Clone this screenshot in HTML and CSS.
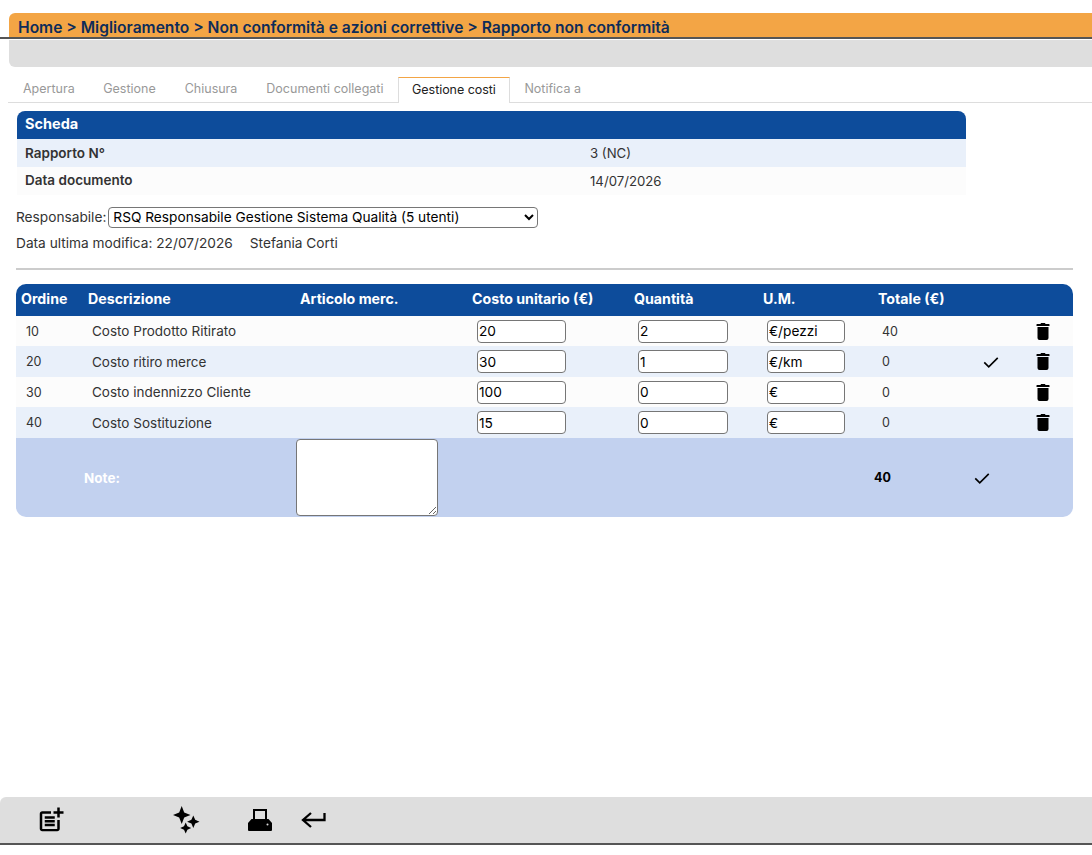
FILE: index.html
```html
<!DOCTYPE html>
<html>
<head>
  <title>Rapporto non conformità</title>
  <link rel="stylesheet" href="styles.css">
</head>
<body>
  <div class="breadcrumb">Home &gt; Miglioramento &gt; Non conformità e azioni correttive &gt; Rapporto non conformità</div>
  <div class="rule"></div>
  <div class="toolbar"></div>

  <div class="tabs">
    <div class="tab">Apertura</div>
    <div class="tab">Gestione</div>
    <div class="tab">Chiusura</div>
    <div class="tab">Documenti collegati</div>
    <div class="tab active">Gestione costi</div>
    <div class="tab">Notifica a</div>
  </div>

  <div class="scheda">
    <div class="scheda-title">Scheda</div>
    <div class="scheda-row alt"><b>Rapporto N°</b><span>3 (NC)</span></div>
    <div class="scheda-row"><b>Data documento</b><span>14/07/2026</span></div>
  </div>

  <div class="resp">
    <label>Responsabile:</label>
    <select class="resp-select">
      <option>RSQ Responsabile Gestione Sistema Qualità (5 utenti)</option>
    </select>
  </div>
  <div class="modified">
    <span>Data ultima modifica: 22/07/2026</span>
    <span>Stefania Corti</span>
  </div>
  <div class="divider"></div>

  <table class="costs">
    <colgroup>
      <col class="c-ord"><col class="c-desc"><col class="c-art"><col class="c-unit">
      <col class="c-qty"><col class="c-um"><col class="c-tot"><col class="c-ok"><col class="c-del">
    </colgroup>
    <thead>
      <tr>
        <th>Ordine</th><th>Descrizione</th><th>Articolo merc.</th><th>Costo unitario (€)</th>
        <th>Quantità</th><th>U.M.</th><th>Totale (€)</th><th></th><th></th>
      </tr>
    </thead>
    <tbody>
      <tr class="row">
        <td class="ord">10</td><td class="desc">Costo Prodotto Ritirato</td><td></td>
        <td><input class="inp" value="20"></td><td><input class="inp" value="2"></td><td><input class="inp um" value="€/pezzi"></td>
        <td class="tot">40</td><td></td>
        <td class="ico"><svg class="trash" viewBox="0 0 13 17"><path d="M4.500 0h4l.5 1h3.500q.5 0 .5.5V3H0V1.500Q0 1 .5 1H4zM1 4h11v11q0 2-2 2H3q-2 0-2-2z"/></svg></td>
      </tr>
      <tr class="row alt h31">
        <td class="ord">20</td><td class="desc">Costo ritiro merce</td><td></td>
        <td><input class="inp" value="30"></td><td><input class="inp" value="1"></td><td><input class="inp um" value="€/km"></td>
        <td class="tot">0</td>
        <td class="ico"><svg class="check" viewBox="0 0 24 24"><path d="M3 12.500l6 6L21 6.500"/></svg></td>
        <td class="ico"><svg class="trash" viewBox="0 0 13 17"><path d="M4.500 0h4l.5 1h3.500q.5 0 .5.5V3H0V1.500Q0 1 .5 1H4zM1 4h11v11q0 2-2 2H3q-2 0-2-2z"/></svg></td>
      </tr>
      <tr class="row">
        <td class="ord">30</td><td class="desc">Costo indennizzo Cliente</td><td></td>
        <td><input class="inp" value="100"></td><td><input class="inp" value="0"></td><td><input class="inp um" value="€"></td>
        <td class="tot">0</td><td></td>
        <td class="ico"><svg class="trash" viewBox="0 0 13 17"><path d="M4.500 0h4l.5 1h3.500q.5 0 .5.5V3H0V1.500Q0 1 .5 1H4zM1 4h11v11q0 2-2 2H3q-2 0-2-2z"/></svg></td>
      </tr>
      <tr class="row alt h31">
        <td class="ord">40</td><td class="desc">Costo Sostituzione</td><td></td>
        <td><input class="inp" value="15"></td><td><input class="inp" value="0"></td><td><input class="inp um" value="€"></td>
        <td class="tot">0</td><td></td>
        <td class="ico"><svg class="trash" viewBox="0 0 13 17"><path d="M4.500 0h4l.5 1h3.500q.5 0 .5.5V3H0V1.500Q0 1 .5 1H4zM1 4h11v11q0 2-2 2H3q-2 0-2-2z"/></svg></td>
      </tr>
    </tbody>
    <tfoot>
      <tr>
        <td></td>
        <td class="note-label">Note:</td>
        <td class="note-cell"><textarea class="note"></textarea></td>
        <td></td><td></td><td></td>
        <td class="sum">40</td>
        <td class="foot-ok"><svg class="check" viewBox="0 0 24 24"><path d="M3 12.500l6 6L21 6.500"/></svg></td>
        <td></td>
      </tr>
    </tfoot>
  </table>

  <div class="bottom-bar">
    <svg class="tool tool-add" viewBox="0 0 24 24"><path d="M17 19.220H5V7h7V5H5c-1.100 0-2 .9-2 2v12c0 1.100.9 2 2 2h12c1.100 0 2-.9 2-2v-7h-2v7.220zM19 2h-2v3h-3v2h3v3h2V7h3V5h-3V2zM7 9h8v2H7zM7 12h8v2H7zM7 15h8v2H7z"/></svg>
    <svg class="tool tool-spark" viewBox="0 0 28 28"><path d="M9.700 0l2.500 6.500L18.500 9 12.200 11.500 9.700 18 7.200 11.500 1 9l6.200-2.500zM21.300 9.500l1.900 4.300 4.300 1.900-4.300 1.900-1.900 4.300-1.900-4.300-4.300-1.900 4.300-1.900zM13.700 16.500l1.700 3.800 3.800 1.700-3.800 1.700-1.700 3.800-1.700-3.800-3.800-1.700 3.800-1.700z"/></svg>
    <svg class="tool tool-print" viewBox="0 0 26 24"><path fill-rule="evenodd" d="M6 1h14v10h1.500L25 15v7q0 1-1 1H2q-1 0-1-1v-7l3.500-4H6zM8 3v8h10V3zM20.500 15.500a1 1 0 1 0 0 2 1 1 0 0 0 0-2z"/></svg>
    <svg class="tool tool-back" viewBox="0 0 26 26"><path d="M24.500 6v7H3M11 6l-8 7 8 7"/></svg>
  </div>
</body>
</html>
```

FILE: styles.css
```css
body {
  margin: 0;
  height: 855px;
  position: relative;
  font-family: Inter, "Noto Sans", sans-serif;
  font-size: 12.5px;
  color: #333;
  background-color: #fff;
  overflow: hidden;
}

.breadcrumb {
  margin: 13px 0 0 9px;
  height: 24px;
  padding-left: 9px;
  line-height: 29px;
  background-color: #f3a545;
  border-radius: 6px 0 0 0;
  color: #0d2c5a;
  font-size: 15.6px;
  font-weight: 600;
}

.rule {
  height: 2px;
  background-color: #555;
}

.toolbar {
  margin: 1px 0 0 9px;
  height: 27px;
  background-color: #dedede;
  border-radius: 0 0 0 6px;
}

.tabs {
  display: flex;
  margin: 10px 0 0 8px;
  height: 25px;
  border-bottom: 1px solid #ddd;
}

.tab {
  padding: 0 14.5px;
  line-height: 24px;
  color: #999;
}

.tab:first-child {
  padding-left: 15px;
  padding-right: 14px;
}

.active {
  box-sizing: border-box;
  width: 112px;
  margin-bottom: -1px;
  height: 26px;
  padding: 0;
  background-color: #fff;
  border-top: 1px solid #f3a545;
  border-left: 1px solid #ddd;
  border-right: 1px solid #ddd;
  color: #222;
  text-align: center;
  letter-spacing: -0.05px;
}

.scheda {
  width: 949px;
  margin: 8px 0 0 17px;
}

.scheda-title {
  height: 28px;
  padding-left: 8px;
  line-height: 26px;
  background-color: #0d4c9b;
  border-radius: 8px 8px 0 0;
  color: #fff;
  font-size: 14.5px;
  font-weight: 700;
}

.scheda-row {
  display: flex;
  height: 28px;
  padding-left: 8px;
  line-height: 27px;
  background-color: #fcfcfc;
  font-size: 13.2px;
}

.scheda-row.alt {
  line-height: 29px;
  background-color: #e9f0fa;
}

.scheda-row b {
  width: 565px;
  font-size: 13.5px;
  font-weight: 600;
}

.scheda-row span {
  line-height: 29px;
}

.resp {
  display: flex;
  align-items: center;
  gap: 2px;
  margin: 11px 0 0 16px;
  height: 22px;
  font-size: 13.7px;
}

.resp-select {
  width: 430px;
  height: 21px;
  font-family: Inter, "Noto Sans", sans-serif;
  font-size: 13.7px;
  color: #000;
  background-color: #fff;
  border: 1px solid #767676;
  border-radius: 4px;
}

.modified {
  display: flex;
  gap: 17px;
  margin: 4px 0 0 16px;
  line-height: 22px;
  font-size: 13.7px;
}

.divider {
  margin: 14px 19px 0 16px;
  height: 2px;
  background-color: #ccc;
}

.costs {
  width: 1057px;
  margin: 14px 0 0 16px;
  border-collapse: separate;
  border-spacing: 0;
  table-layout: fixed;
}

.c-ord { width: 67px; }
.c-desc { width: 212px; }
.c-art { width: 172px; }
.c-unit { width: 162px; }
.c-qty { width: 129px; }
.c-um { width: 115px; }
.c-tot { width: 87px; }
.c-ok { width: 60px; }

.costs th {
  height: 29px;
  padding: 0 0 3px 5px;
  background-color: #0d4c9b;
  color: #fff;
  font-size: 14.2px;
  font-weight: 700;
  text-align: left;
}

.costs th:first-child { border-radius: 10px 0 0 0; }
.costs th:last-child { border-radius: 0 10px 0 0; }

.row td {
  height: 30px;
  padding: 0;
  background-color: #fcfcfc;
}

.row.alt td {
  background-color: #e9f0fa;
}

.h31 td {
  height: 31px;
}

.ord { padding-left: 10px !important; }
.desc { padding-left: 9px !important; font-size: 13.5px; }
.tot { padding-left: 9px !important; }

.inp {
  display: block;
  box-sizing: border-box;
  width: 89px;
  height: 23px;
  margin-left: 10px;
  padding: 0 1px;
  font-family: Inter, "Noto Sans", sans-serif;
  font-size: 13.7px;
  color: #000;
  background-color: #fff;
  border: 1px solid #767676;
  border-radius: 4px;
}

td:nth-child(5) .inp {
  width: 90px;
  margin-left: 9px;
}

.um {
  width: 78px;
  margin-left: 9px;
}

.ico {
  text-align: left;
}

.trash {
  display: block;
  width: 14px;
  height: 17px;
  margin-left: 16px;
  fill: #000;
}

.check {
  display: block;
  width: 18px;
  height: 18px;
  fill: none;
  stroke: #000;
  stroke-width: 2.2;
}

.ico .check {
  margin-left: 22px;
}

tfoot td {
  height: 79px;
  padding: 0;
  background-color: #c2d1ef;
}

tfoot td:first-child { border-radius: 0 0 0 10px; }
tfoot td:last-child { border-radius: 0 0 10px 0; }

.note-label {
  padding-left: 1px;
  color: #fff;
  font-size: 13.5px;
  font-weight: 700;
}

.note {
  display: block;
  box-sizing: border-box;
  width: 142px;
  height: 77px;
  margin-left: 1px;
  background-color: #fff;
  border: 1px solid #767676;
  border-radius: 4px;
}

.sum {
  padding-left: 1px !important;
  color: #000;
  font-weight: 700;
}

.foot-ok .check {
  margin-left: 13px;
}

.bottom-bar {
  position: absolute;
  left: 0;
  right: 0;
  top: 797px;
  height: 46px;
  display: flex;
  align-items: center;
  background-color: #dedede;
  border-bottom: 2px solid #555;
  border-radius: 6px 0 0 0;
}

.tool {
  flex: none;
  fill: #000;
}

.tool-add {
  width: 30px;
  height: 30px;
  margin-left: 36px;
}

.tool-spark {
  width: 28px;
  height: 28px;
  margin-left: 106px;
}

.tool-print {
  width: 26px;
  height: 24px;
  margin-left: 47px;
}

.tool-back {
  width: 26px;
  height: 26px;
  margin-left: 27px;
  fill: none;
  stroke: #000;
  stroke-width: 2.3;
}
```
